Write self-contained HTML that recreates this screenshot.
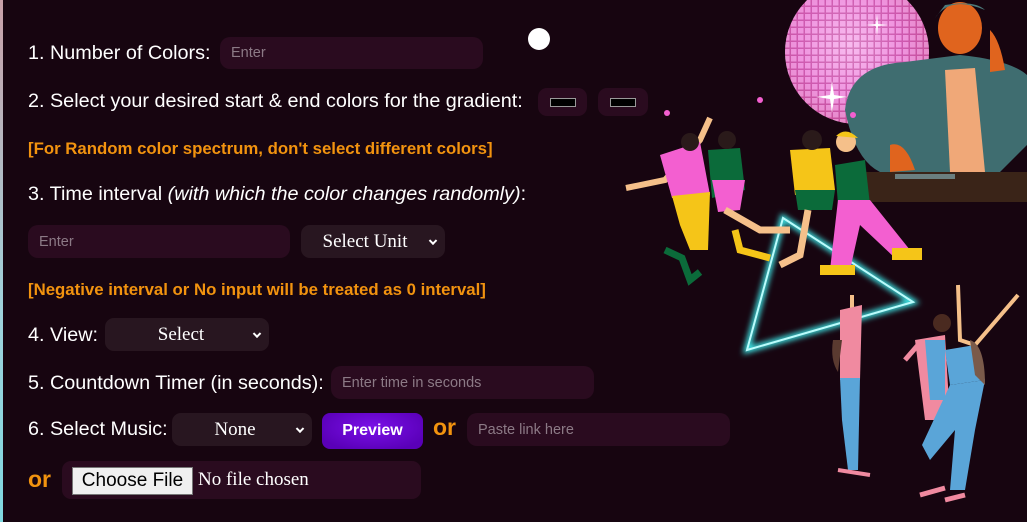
<!DOCTYPE html>
<html><head><style>
*{margin:0;padding:0;box-sizing:border-box}
html,body{width:1027px;height:522px;overflow:hidden;background:#170510;font-family:"Liberation Sans",sans-serif;color:#fff}
.strip{position:absolute;left:0;top:0;width:3px;height:522px;background:linear-gradient(#c9a0a8,#9fd3dc 60%,#7fd8e0)}
.a{position:absolute;white-space:nowrap}
.lbl{font-size:19.8px;line-height:22px}
.warn{font-size:16.8px;font-weight:bold;color:#f2930f}
.in{position:absolute;background:#2a0b1f;border-radius:10px;color:#8c7a86;font-size:14.5px;padding-left:11px;display:flex;align-items:center}
.sel{position:absolute;background:#281620;border-radius:9px;font-family:"Liberation Serif",serif;font-size:19px;color:#fff;display:flex;align-items:center;justify-content:center}
.sel i{position:absolute;right:9px;top:50%;width:6px;height:6px;border-right:2px solid #fff;border-bottom:2px solid #fff;transform:translateY(-70%) rotate(45deg)}
.or{font-size:23px;font-weight:bold;color:#f2930f}
.sw{position:absolute;background:#2a0b1f;border-radius:9px}
.sw b{position:absolute;left:12px;top:10px;width:26px;height:9px;background:#000;border:1px solid #999}
</style></head><body>
<div class="strip"></div>
<svg class="a" style="left:0;top:0" width="1027" height="522">
<circle cx="539" cy="39" r="11" fill="#fff"/>
<defs><radialGradient id="d" cx=".45" cy=".45" r=".6"><stop offset="0" stop-color="#f9b7ee"/><stop offset=".6" stop-color="#e86fd0"/><stop offset="1" stop-color="#d45aa0"/></radialGradient>
<pattern id="t" width="7" height="7" patternUnits="userSpaceOnUse"><rect width="7" height="7" fill="#f7c0f0"/><rect x="5.5" width="1.5" height="7" fill="#b0408a"/><rect y="5.5" width="7" height="1.5" fill="#b0408a"/></pattern>
<filter id="g"><feGaussianBlur stdDeviation="3"/></filter></defs>
<circle cx="857" cy="52" r="72" fill="url(#t)"/>
<circle cx="857" cy="52" r="72" fill="url(#d)" opacity=".55"/>
<path d="M830 95l2-14 2 14 14 2-14 2-2 14-2-14-14-2z" fill="#fff"/>
<path d="M876 24l1-10 1 10 10 1-10 1-1 10-1-10-10-1z" fill="#fff"/>
<rect x="860" y="172" width="167" height="30" fill="#3a2418"/>
<rect x="895" y="174" width="60" height="5" fill="#6b7f80"/>
<path d="M845 110 Q850 65 905 62 L960 55 Q1010 60 1027 75 L1027 145 L1000 172 L880 172 Q855 160 845 110z" fill="#3f6d70"/>
<path d="M945 70 L975 68 L985 172 L950 172z" fill="#f0a878"/>
<ellipse cx="960" cy="28" rx="22" ry="26" fill="#e0641e"/>
<path d="M935 18 Q950 -5 985 10 Q975 0 945 5z" fill="#4c7a7a"/>
<path d="M890 145 Q905 140 915 170 L890 172z" fill="#e0641e"/>
<path d="M990 30 Q1000 40 1005 70 L990 72z" fill="#e0641e"/>
<path d="M783 218 L913 302 L747 350z" fill="none" stroke="#3ee8e8" stroke-width="6" filter="url(#g)"/>
<path d="M783 218 L913 302 L747 350z" fill="none" stroke="#bafcfc" stroke-width="2"/>
<path d="M626 188 L665 180 L700 140 L710 118" stroke="#f5c08a" stroke-width="6" fill="none"/>
<path d="M660 155 L700 142 L710 195 L672 198z" fill="#f35fd0"/>
<path d="M672 196 L710 192 L708 250 L690 250 L680 225z" fill="#f5c518"/>
<path d="M665 250 L682 258 L690 280 L700 272" stroke="#0b6b3a" stroke-width="7" fill="none"/>
<circle cx="690" cy="142" r="9" fill="#2a1a1a"/>
<path d="M708 150 L740 148 L745 190 L712 198z" fill="#0b6b3a"/>
<path d="M712 180 L745 180 L740 210 L718 212z" fill="#f35fd0"/>
<path d="M725 210 L760 230 L790 230" stroke="#f5c08a" stroke-width="7" fill="none"/>
<path d="M735 230 L740 250 L770 258" stroke="#f5c518" stroke-width="7" fill="none"/>
<circle cx="727" cy="140" r="9" fill="#2a1a1a"/>
<path d="M790 150 L830 148 L835 190 L795 195z" fill="#f5c518"/>
<path d="M795 190 L835 190 L832 210 L798 210z" fill="#0b6b3a"/>
<path d="M808 210 L800 255 L780 265" stroke="#f5c08a" stroke-width="7" fill="none"/>
<circle cx="812" cy="140" r="10" fill="#2a1a1a"/>
<path d="M835 165 L865 160 L870 205 L838 205z" fill="#0b6b3a"/>
<path d="M838 200 L870 200 L910 250 L895 258 L860 225 L850 270 L830 270z" fill="#f35fd0"/>
<rect x="820" y="265" width="35" height="10" fill="#f5c518"/>
<rect x="892" y="248" width="30" height="12" fill="#f5c518"/>
<circle cx="846" cy="142" r="10" fill="#f5c08a"/>
<path d="M836 136 Q846 126 858 138z" fill="#f5c518"/>
<circle cx="667" cy="113" r="3" fill="#f35fd0"/><circle cx="760" cy="100" r="3" fill="#f35fd0"/><circle cx="853" cy="115" r="3" fill="#f35fd0"/>
<path d="M852 295 L852 315" stroke="#f5c08a" stroke-width="4"/>
<path d="M840 310 L862 305 L860 380 L840 380z" fill="#f08aa0"/>
<path d="M833 340 Q830 360 838 372 L842 340z" fill="#5a3a30"/>
<path d="M840 378 L860 378 L858 470 L848 470 L842 420z" fill="#5aa5d8"/>
<path d="M838 470 L870 475" stroke="#f08aa0" stroke-width="4"/>
<circle cx="942" cy="323" r="9" fill="#4a2a20"/>
<path d="M915 340 L945 335 L950 420 L925 420z" fill="#f08aa0"/>
<path d="M925 340 L945 340 L945 400 L930 400z" fill="#5aa5d8"/>
<path d="M905 360 L918 345" stroke="#f08aa0" stroke-width="5"/>
<path d="M958 285 L960 340 L975 345 L1018 295" stroke="#f5c08a" stroke-width="4" fill="none"/>
<path d="M945 350 L975 345 L985 380 L950 385z" fill="#5aa5d8"/>
<path d="M950 385 L985 380 L975 430 L965 490 L950 490 L955 430 L930 460 L922 445z" fill="#5aa5d8"/>
<path d="M920 495 L945 488 M945 500 L965 495" stroke="#f08aa0" stroke-width="5"/>
<path d="M970 340 Q985 345 985 385 L975 375z" fill="#7a5a4a"/>
</svg>

<div class="a lbl" style="left:28px;top:42px">1. Number of Colors:</div>
<div class="in" style="left:220px;top:37px;width:263px;height:32px">Enter</div>
<div class="a lbl" style="left:28px;top:90px">2. Select your desired start &amp; end colors for the gradient:</div>
<div class="sw" style="left:538px;top:88px;width:49px;height:28px"><b></b></div>
<div class="sw" style="left:598px;top:88px;width:50px;height:28px"><b></b></div>
<div class="a warn" style="left:28px;top:139px">[For Random color spectrum, don't select different colors]</div>
<div class="a lbl" style="left:28px;top:183px">3. Time interval <i>(with which the color changes randomly)</i>:</div>
<div class="in" style="left:28px;top:225px;width:262px;height:33px">Enter</div>
<div class="sel" style="left:301px;top:225px;width:144px;height:33px;padding-right:16px">Select Unit<i></i></div>
<div class="a warn" style="left:28px;top:280px">[Negative interval or No input will be treated as 0 interval]</div>
<div class="a lbl" style="left:28px;top:324px">4. View:</div>
<div class="sel" style="left:105px;top:318px;width:164px;height:33px;padding-right:12px">Select<i></i></div>
<div class="a lbl" style="left:28px;top:372px">5. Countdown Timer (in seconds):</div>
<div class="in" style="left:331px;top:366px;width:263px;height:33px">Enter time in seconds</div>
<div class="a lbl" style="left:28px;top:418px">6. Select Music:</div>
<div class="sel" style="left:172px;top:413px;width:140px;height:33px;padding-right:14px">None<i></i></div>
<div class="a" style="left:322px;top:413px;width:101px;height:36px;border-radius:8px;background:radial-gradient(ellipse at 50% 40%,#7a10e8,#5a00b8 80%);font-weight:bold;font-size:16px;display:flex;align-items:center;justify-content:center">Preview</div>
<div class="a or" style="left:433px;top:414px">or</div>
<div class="in" style="left:467px;top:413px;width:263px;height:33px">Paste link here</div>
<div class="a or" style="left:28px;top:466px">or</div>
<div class="a" style="left:62px;top:461px;width:359px;height:38px;background:#2a0b1f;border-radius:9px"></div>
<div class="a" style="left:72px;top:467px;width:121px;height:28px;background:#f0f0f0;border:1px solid #767676;color:#000;font-size:19px;display:flex;align-items:center;justify-content:center">Choose File</div>
<div class="a" style="left:198px;top:469px;font-family:'Liberation Serif',serif;font-size:19px">No file chosen</div>
</body></html>
